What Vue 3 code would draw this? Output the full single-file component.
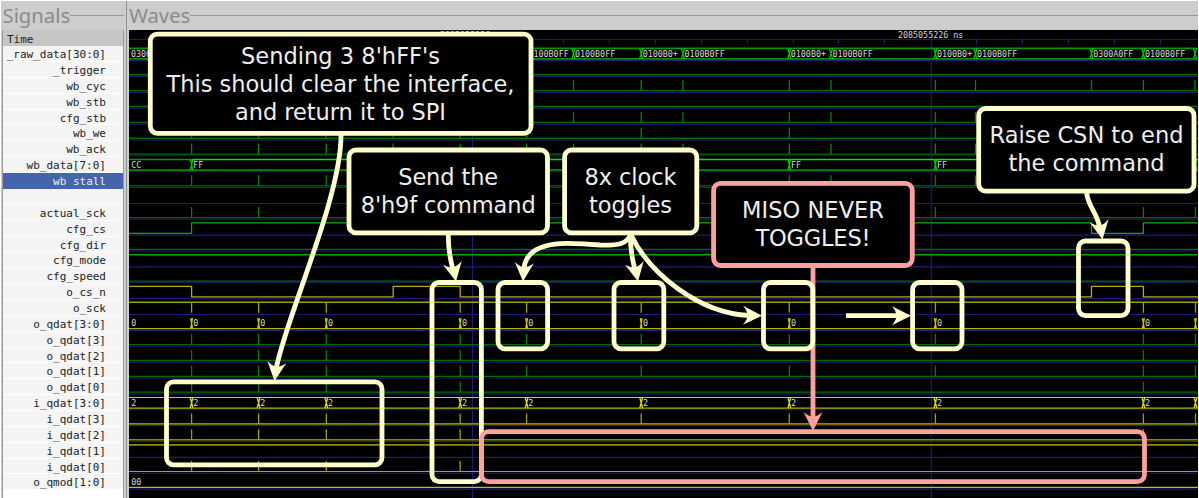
<template>
  <div class="viewer">
    <aside class="signals">
      <div class="legend">
        <span class="title">Signals</span>
        <span class="rule"></span>
      </div>
      <div class="list">
        <div class="time">Time</div>
        <ul class="names">
          <li v-for="(name, i) in names" :key="i" :class="{ selected: name === 'wb_stall' }">
            <span>{{ name }}</span>
          </li>
        </ul>
      </div>
    </aside>

    <main class="waves">
      <div class="legend">
        <span class="title">Waves</span>
        <span class="rule"></span>
      </div>
      <svg class="canvas" width="1069" height="468" viewBox="129 30 1069 468">
        <rect x="129" y="30" width="1069" height="468" fill="#000" />

        <!-- time ruler and grid -->
        <g class="grid">
          <path d="M129 39.5H1198M472.5 39V498M931.3 30V498" />
          <path v-for="x in ticks" :key="x" :d="`M${x} 39.5V44.5`" />
          <path v-for="(n, i) in names" :key="i" :d="`M129 ${mark(i)}H1198`" />
        </g>
        <text x="440" y="37.500" class="value">2085055126 ns</text>
        <text x="898" y="37.500" class="value">2085055226 ns</text>

        <path
          v-for="(t, i) in traces"
          :key="i"
          :d="t.d"
          :stroke="t.color"
          :stroke-width="t.width || 1"
          fill="none"
        />
        <text v-for="(l, i) in labels" :key="i" :x="l.x" :y="low(l.row) - 2.2" class="value">{{ l.text }}</text>
      </svg>
    </main>

    <svg class="notes" width="1199" height="498" viewBox="0 0 1199 498">
      <g class="pink">
        <path d="M813 266V418" />
        <path :d="head" class="head" transform="translate(813 431) rotate(90)" />
      </g>
      <g class="cream">
        <path v-for="(a, i) in arrows" :key="i" :d="a.d" />
        <path
          v-for="(a, i) in arrows"
          :key="'h' + i"
          :d="head"
          class="head"
          :transform="`translate(${a.x} ${a.y}) rotate(${a.angle})`"
        />
        <rect
          v-for="(b, i) in frames"
          :key="'f' + i"
          :x="b[0]"
          :y="b[1]"
          :width="b[2] - b[0]"
          :height="b[3] - b[1]"
          rx="7"
        />
      </g>
      <g class="pink">
        <rect x="481.5" y="431.7" width="663" height="50" rx="7" />
      </g>
      <g v-for="(c, i) in callouts" :key="i" :class="c.tone">
        <rect
          :x="c.box[0]"
          :y="c.box[1]"
          :width="c.box[2] - c.box[0]"
          :height="c.box[3] - c.box[1]"
          rx="7"
          class="solid"
        />
        <text
          v-for="(line, j) in c.lines"
          :key="j"
          :x="c.cx"
          :y="c.y + j * 28"
          :textLength="line[1]"
        >{{ line[0] }}</text>
      </g>
    </svg>
  </div>
</template>

<script setup>
const names = [
  '_raw_data[30:0]', '_trigger', 'wb_cyc', 'wb_stb', 'cfg_stb', 'wb_we', 'wb_ack',
  'wb_data[7:0]', 'wb_stall', '', 'actual_sck', 'cfg_cs', 'cfg_dir', 'cfg_mode',
  'cfg_speed', 'o_cs_n', 'o_sck', 'o_qdat[3:0]', 'o_qdat[3]', 'o_qdat[2]',
  'o_qdat[1]', 'o_qdat[0]', 'i_qdat[3:0]', 'i_qdat[3]', 'i_qdat[2]', 'i_qdat[1]',
  'i_qdat[0]', 'o_qmod[1:0]'
]

const pitch = 15.87
const high = (row) => 48.4 + row * pitch
const low = (row) => 58.9 + row * pitch
const mark = (row) => 60.6 + row * pitch

const ticks = [150, 196, 242, 288, 334, 380, 426, 517.5, 563.4, 609.4, 655.4, 701.4, 747.4, 793.4, 838.5, 884.5, 976.4, 1022.4, 1068.4, 1114.4, 1160.4]

// event times, in canvas x
const burst = [191.6, 258.6, 326.3]
const sends = [...burst, 460.2]
const clocks = [526.6, 641.2, 789.3, 935.4]
const data = [...sends, ...clocks, 1143.4, 1195.5]
const config = [573.5, 683, 831, 975.5]
const bus = [...burst, 393.2, 460.2, 526.6, 573.5, 641.2, 683, 789.3, 831, 935.4, 975.5, 1091.5, 1143.4, 1195]
const writes = [...burst, 393.2, 460.2, ...clocks, 1091.5, 1143.4, 1195.5]

const dark = '#006c00'
const green = '#009600'
const bright = '#00c800'
const olive = '#8c8c00'
const yellow = '#c8c800'

const traces = []
const line = (y, color, width) => traces.push({ d: `M129 ${y}H1198`, color, width })
const pulses = (row, xs, color) => {
  traces.push({ d: xs.map((x) => `M${x} ${high(row)}V${low(row)}`).join(''), color, width: 1.3 })
}
const crosses = (row, xs, color, w = 1.6) => {
  const d = xs
    .map((x) => `M${x - w} ${high(row)}L${x + w} ${low(row)}M${x + w} ${high(row)}L${x - w} ${low(row)}`)
    .join('')
  traces.push({ d, color, width: 1.3 })
}

line(high(0), green, 1.6)
line(low(0), green, 1.6)
crosses(0, bus, bright)
;[1, 2, 3, 4, 5, 6, 8, 10, 12, 14, 18, 19, 20, 21].forEach((row) => line(low(row), dark, 1.3))
pulses(2, bus, '#008c00')
pulses(4, bus, '#008200')
pulses(5, writes, '#008200')
pulses(6, [...data, ...config, 393.2, 1091.5], '#008c00')
pulses(8, [...data, ...config, 393.2, 1091.5], '#008200')
traces.push({ d: `M129 ${high(7)}H191.6`, color: green, width: 1.3 })
traces.push({ d: `M191.6 ${high(7)}H1198`, color: '#00e600', width: 1.5 })
line(low(7), '#00a000', 1.4)
crosses(7, [191.6, 789.3, 935.4, 1195.5], bright, 1.2)
pulses(10, data, '#008200')
traces.push({
  d: `M129 ${low(11)}H191.6V${high(11)}H1091.5V${low(11)}H1143.4V${high(11)}H1198`,
  color: '#00b000',
  width: 1.2
})
line(high(13), '#00a800', 1.4)
traces.push({
  d: `M129 ${high(15)}H191.6V${low(15)}H393.2V${high(15)}H460.2V${low(15)}H1091.5V${high(15)}H1143.4V${low(15)}H1198`,
  color: '#b0b000',
  width: 1.3
})
line(high(16), '#a0a000', 1.5)
pulses(16, data, '#a0a000')
line(low(17), '#b0b000', 1.3)
crosses(17, data, yellow, 0.9)
pulses(18, data, '#008200')
pulses(19, [...sends, 1143.4], '#008200')
pulses(20, data, '#008200')
pulses(21, [...sends, 1143.4], '#008200')
line(high(22), '#d2d200', 1.1)
line(low(22), '#b4b400', 1.2)
crosses(22, data, '#dcdc00', 1.4)
line(low(23), olive, 1.7)
line(low(24), olive, 1.6)
line(high(25) - 0.2, olive, 1.7)
line(low(26), '#aaaa00', 1.1)
pulses(23, data, '#a0a000')
pulses(24, [...sends, 1143.4], '#a0a000')
pulses(26, sends, '#a0a000')
line(low(27), '#c0c000', 1.1)

const labels = [
  { row: 0, x: 131, text: '0300A0FF' },
  ...[[528.5, 'FF'], [575, 'FF'], [642.7, '+'], [684.5, 'FF'], [790.8, '+'], [832.5, 'FF'], [937, '+'], [977, 'FF'], [1145, 'FF']]
    .map(([x, end]) => ({ row: 0, x, text: '0100B0' + end })),
  { row: 0, x: 1093.2, text: '0300A0FF' },
  { row: 7, x: 131.3, text: 'CC' },
  { row: 7, x: 193.3, text: 'FF' },
  { row: 7, x: 791, text: 'FF' },
  { row: 7, x: 937, text: 'FF' },
  { row: 7, x: 1197, text: 'FF' },
  { row: 17, x: 131.3, text: '0' },
  { row: 22, x: 131.3, text: '2' },
  ...data.slice(0, -1).flatMap((x) => [
    { row: 17, x: x + 1.7, text: '0' },
    { row: 22, x: x + 1.7, text: '2' }
  ]),
  { row: 27, x: 131.3, text: '00' }
]

const head = 'M0 0L-19 -9.5Q-14.5 -4 -14.5 0T-19 9.5Z'

const arrows = [
  { d: 'M341 134C342 195 287 315 276.500 367', x: 274.5, y: 381, angle: 97 },
  { d: 'M448.300 233Q448 250 452.500 268', x: 456, y: 281.5, angle: 79 },
  { d: 'M630.500 234C628 244 618 245.500 600 245C590 244 578 243.300 567 243.300C540 243.500 526 252 524 268', x: 523, y: 281.5, angle: 94 },
  { d: 'M630.500 234Q630 250 634.500 268', x: 638, y: 281.5, angle: 79 },
  { d: 'M630.500 234C650 275 700 313 749 315.500', x: 762, y: 315.7, angle: 1 },
  { d: 'M846 315.700H898', x: 911, y: 315.7, angle: 0 },
  { d: 'M1086.500 192C1088 207 1097 212 1099.500 227', x: 1102.5, y: 239.5, angle: 80 }
]

// left, top, right, bottom of the outlined regions
const frames = [
  [166.5, 381.8, 382, 464.8],
  [432, 282.5, 481.4, 481.6],
  [498, 282.5, 547.6, 348.8],
  [614, 282.5, 663.8, 348.8],
  [763.5, 282.5, 812.8, 348.8],
  [912.6, 282.5, 962, 348.8],
  [1078.5, 241, 1128, 315.6]
]

const callouts = [
  {
    tone: 'cream',
    box: [150.3, 34.1, 531, 133.3],
    cx: 340.5,
    y: 63.7,
    lines: [["Sending 3 8'hFF's", 199], ['This should clear the interface,', 348], ['and return it to SPI', 211]]
  },
  { tone: 'cream', box: [349, 150, 547.5, 232.9], cx: 448.2, y: 184.7, lines: [['Send the', 100], ["8'h9f command", 175]] },
  { tone: 'cream', box: [564.6, 150, 696.8, 232.9], cx: 630.5, y: 184.7, lines: [['8x clock', 92], ['toggles', 83]] },
  { tone: 'pink', box: [713.6, 183.3, 912.3, 265.5], cx: 813, y: 217.7, lines: [['MISO NEVER', 142], ['TOGGLES!', 115]] },
  { tone: 'cream', box: [978.7, 108.5, 1194, 191.2], cx: 1086.5, y: 143.2, lines: [['Raise CSN to end', 194], ['the command', 156]] }
]
</script>

<style>
body {
  margin: 0;
  background: #fff;
}
</style>

<style scoped>
.viewer {
  position: relative;
  display: flex;
  width: 1199px;
  height: 498px;
  padding: 1px 1px 0 1px;
  box-sizing: border-box;
  overflow: hidden;
  background: #fff;
}

.signals {
  flex: none;
  width: 126px;
  height: 497px;
  box-sizing: border-box;
  padding-left: 1px;
  border-right: 1px solid #929292;
  background: #cdcdcd;
}

.legend {
  display: flex;
  height: 29px;
}

.title {
  font: 20.3px/29px 'Noto Sans', sans-serif;
  color: #8b8b8b;
}

.signals .title {
  padding-left: 0.5px;
}

.rule {
  flex: 1;
  height: 1px;
  margin-top: 14px;
  background: #999;
}

.signals .rule {
  margin-right: 2px;
}

.list {
  width: 122px;
  height: 468px;
  box-sizing: border-box;
  border-left: 1px solid #999;
  border-right: 1px solid #999;
  background: #fff;
  font: 11px/16px 'DejaVu Sans Mono', monospace;
  color: #222;
}

.time {
  height: 16.2px;
  padding-left: 4px;
  line-height: 19px;
  background: #c6c6c6;
}

.names {
  margin: 0;
  padding: 0;
  list-style: none;
}

.names li {
  display: flex;
  justify-content: flex-end;
  height: 15.87px;
  box-sizing: border-box;
  padding-right: 17px;
  line-height: 17.4px;
  white-space: pre;
  background: #f4f4f4;
  border-bottom: 1px solid #fff;
}

.names li.selected {
  color: #eee;
  background: #4464ac;
  border-bottom-color: #4464ac;
}

.names li.selected span {
  height: 13px;
  overflow: hidden;
}

.waves {
  flex: none;
  width: 1071px;
  box-sizing: border-box;
  padding-left: 2px;
  background: #cdcdcd;
}

.canvas {
  display: block;
}

.grid path {
  stroke: #1c1c78;
  stroke-width: 1.1;
}

.value {
  font: 8.35px 'DejaVu Sans Mono', monospace;
  fill: #d8d8d8;
}

.notes {
  position: absolute;
  top: 0;
  left: 0;
}

.notes path,
.notes rect {
  fill: none;
  stroke-width: 4.8;
}

.notes text {
  font: 22.5px 'DejaVu Sans', sans-serif;
  text-anchor: middle;
  fill: #eee;
}

.notes .solid {
  fill: #000;
}

.cream path,
.cream rect {
  stroke: #ffffcc;
}

.pink path,
.pink rect {
  stroke: #ffa0a0;
}

.notes .head {
  stroke: none;
}

.cream .head {
  fill: #ffffcc;
}

.pink .head {
  fill: #ffa0a0;
}
</style>
